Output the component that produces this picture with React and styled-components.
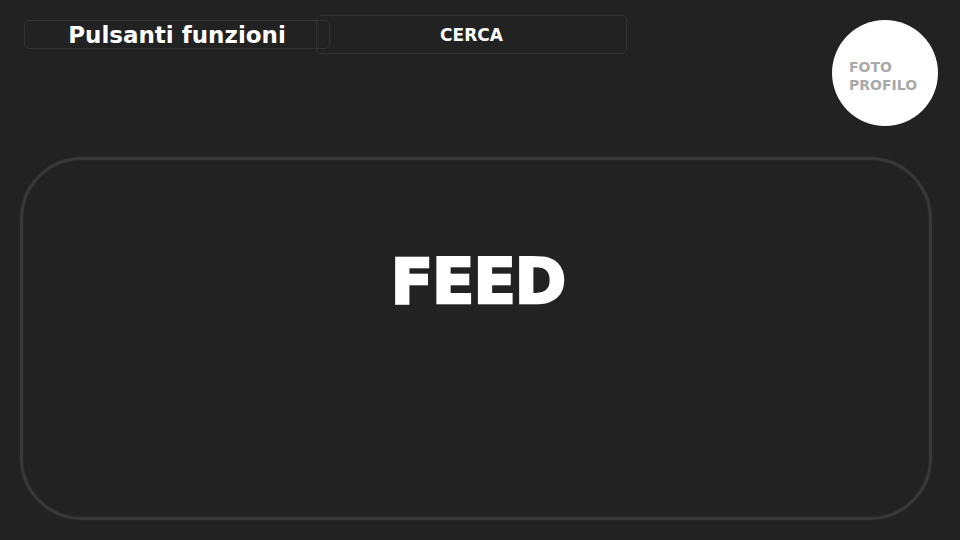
import styled, { createGlobalStyle } from "styled-components";

const GlobalStyle = createGlobalStyle`
html, body {
    margin: 0;
    padding: 0;
    background: #222222;
    font-family: "DejaVu Sans", "Noto Sans", sans-serif;
}
`

const Page = styled.div`
width: 960px;
height: 540px;
background: #222222;
overflow: hidden;
`
const Header = styled.header`
display: flex;
align-items: flex-start;
`
const TopBox = styled.div`
display: flex;
align-items: center;
justify-content: center;
box-sizing: border-box;
border: 1px solid #333333;
border-radius: 5px;
color: #ffffff;
font-weight: 700;
`
const FunctionsBox = styled(TopBox)`
position: relative;
z-index: 1;
margin: 20px 0 0 24px;
width: 306px;
height: 29px;
font-size: 23px;
`
const SearchBox = styled(TopBox)`
margin: 15px 0 0 -14px;
width: 311px;
height: 39px;
font-size: 17px;
`
const Spacer = styled.div`
flex: 1;
`
const Avatar = styled.div`
margin: 20px 22px 0 0;
width: 106px;
height: 106px;
border-radius: 50%;
background: #ffffff;
display: flex;
flex-direction: column;
justify-content: center;
padding: 5px 0 0 17px;
box-sizing: border-box;
color: #a9a9a9;
font-weight: 700;
font-size: 14px;
line-height: 18px;
`
const Feed = styled.main`
margin: 31px 28px 0 20px;
height: 363px;
box-sizing: border-box;
border: 3px solid #383838;
border-radius: 62px;
box-shadow: 0 0 2px #333333, inset 0 0 2px #333333;
display: flex;
justify-content: center;
padding: 78px 0 0 4px;
`
const FeedTitle = styled.h1`
margin: 0;
color: #ffffff;
-webkit-text-stroke: 2.5px #ffffff;
font-size: 62px;
font-weight: 700;
line-height: 88px;
letter-spacing: -1px;
`

export default function App() {
    return (
        <Page>
            <GlobalStyle />
            <Header>
                <FunctionsBox>Pulsanti funzioni</FunctionsBox>
                <SearchBox>CERCA</SearchBox>
                <Spacer />
                <Avatar>
                    <span>FOTO</span>
                    <span>PROFILO</span>
                </Avatar>
            </Header>
            <Feed>
                <FeedTitle>FEED</FeedTitle>
            </Feed>
        </Page>
    )
}
